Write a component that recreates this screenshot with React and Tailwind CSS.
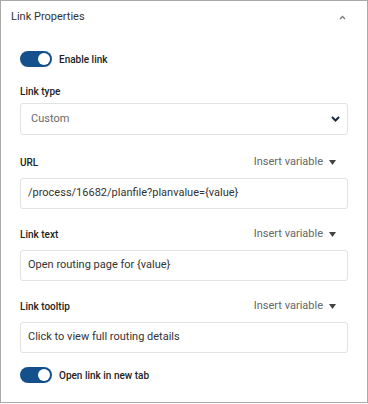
import { useState } from 'react';

function Toggle({ label, on }) {
  return (
    <div className="flex items-center gap-[7px] h-4">
      <div className={`relative w-[32px] h-[16px] rounded-full ${on ? 'bg-[#13508c]' : 'bg-gray-300'}`}>
        <div className="absolute right-[2px] top-[2px] w-[12px] h-[12px] rounded-full bg-white" />
      </div>
      <span className="text-[10px] font-medium text-[#222]">{label}</span>
    </div>
  );
}

function FieldLabel({ children, variable }) {
  return (
    <div className="flex items-center justify-between h-5">
      <span className="text-[10px] font-medium text-[#222]">{children}</span>
      {variable && (
        <span className="flex items-center gap-[6px] mr-[12px] text-[11px] text-[#666]">
          Insert variable
          <svg width="7" height="5" viewBox="0 0 7 5"><path d="M0 0h7L3.5 5z" fill="#444" /></svg>
        </span>
      )}
    </div>
  );
}

function TextBox({ value }) {
  return (
    <div className="h-[31px] border border-[#e3e3e3] rounded-[3px] flex items-center pl-[7px] text-[11px] text-[#333]">
      {value}
    </div>
  );
}

export default function App() {
  const [fields] = useState([
    { label: 'URL', value: '/process/16682/planfile?planvalue={value}' },
    { label: 'Link text', value: 'Open routing page for {value}' },
    { label: 'Link tooltip', value: 'Click to view full routing details' },
  ]);

  return (
    <div className="w-[368px] h-[403px] border border-[#a9a9a9] bg-white font-['Roboto',sans-serif]">
      {/* Header */}
      <div className="flex items-center justify-between pl-[10px] pr-[21px] pt-[6px] h-[26px]">
        <span className="text-[11px] text-[#333]">Link Properties</span>
        <svg width="7" height="5" viewBox="0 0 7 5"><path d="M1 4l2.5-2.5L6 4" fill="none" stroke="#777" strokeWidth="1.3" /></svg>
      </div>

      <div className="px-[19px] pt-[24px]">
        <Toggle label="Enable link" on />

        <div className="mt-[14px]">
          <FieldLabel>Link type</FieldLabel>
        </div>
        <div className="mt-[2px] h-[32px] border border-[#e3e3e3] rounded-[3px] flex items-center justify-between pl-[10px] pr-[7px] text-[11px] text-[#6a6a6a]">
          Custom
          <svg width="9" height="6" viewBox="0 0 9 6"><path d="M1 1l3.5 3.5L8 1" fill="none" stroke="#1c2740" strokeWidth="2" /></svg>
        </div>

        {fields.map((f, i) => (
          <div key={f.label} className={i === 0 ? 'mt-[17px]' : 'mt-[15px]'}>
            <FieldLabel variable>{f.label}</FieldLabel>
            <div className="mt-[6px]">
              <TextBox value={f.value} />
            </div>
          </div>
        ))}

        <div className="mt-[14px]">
          <Toggle label="Open link in new tab" on />
        </div>
      </div>
    </div>
  );
}
